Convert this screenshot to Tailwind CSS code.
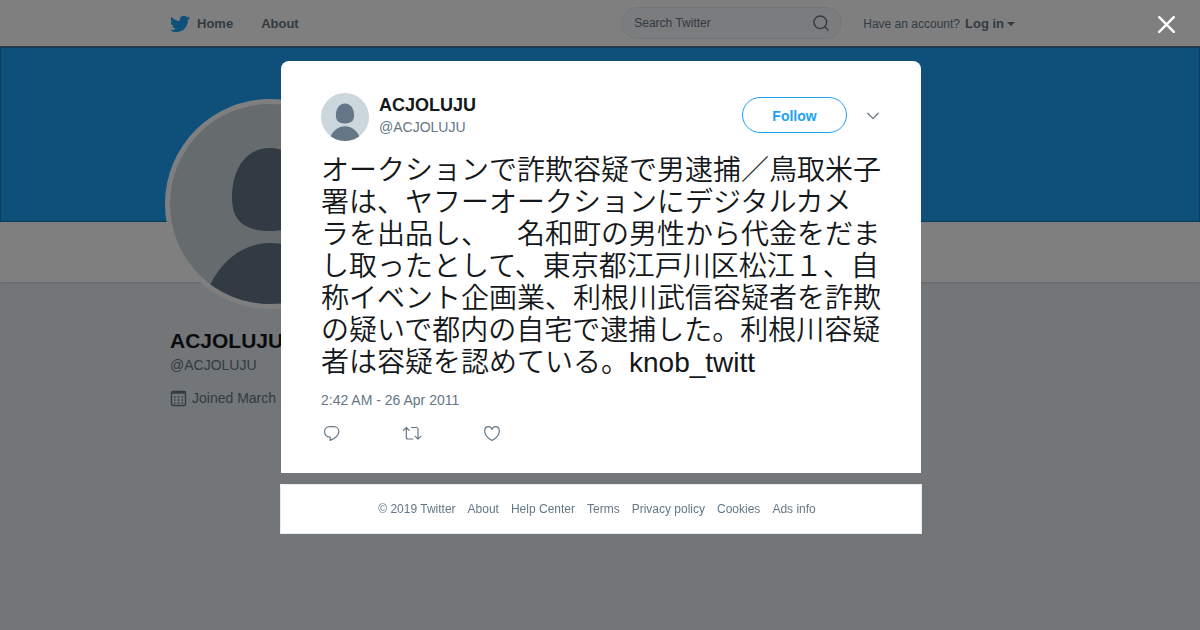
<!DOCTYPE html>
<html lang="ja">
<head>
  <meta charset="UTF-8">
  <meta name="viewport" content="width=device-width, initial-scale=1">
  <title>ACJOLUJU on Twitter</title>
  <script src="https://cdn.jsdelivr.net/npm/@tailwindcss/browser@4"></script>
</head>
<body class="min-h-screen overflow-hidden bg-[#e6ecf0] font-['Liberation_Sans','Noto_Sans_CJK_JP',sans-serif] text-sm text-[#657786]">

  <!-- shared avatar drawing -->
  <svg class="absolute size-0" aria-hidden="true">
    <symbol id="avatar" viewBox="0 0 200 200">
      <path fill="#ccd6dd" d="M0 0h200v200H0z"/>
      <path fill="#657786" d="M100 44c-24 0-38 21-38 50 0 23 13 33 38 33s38-10 38-33c0-29-14-50-38-50zM40 181c13-26 34-42 60-42s47 16 60 42v19H40z"/>
    </symbol>
  </svg>

  <!-- top bar -->
  <header class="border-b border-[#697178] bg-white">
    <div class="mx-auto flex h-[46px] max-w-[860px] items-center">
      <nav class="flex items-center gap-7 pt-0.5 text-[13px] font-bold">
        <a href="#" class="flex items-center gap-[7px]">
          <svg class="size-5" viewBox="0 0 24 24" fill="#1da1f2"><path d="M23.953 4.57a10 10 0 01-2.825.775 4.958 4.958 0 002.163-2.723c-.951.555-2.005.959-3.127 1.184a4.92 4.92 0 00-8.384 4.482C7.69 8.095 4.067 6.13 1.64 3.162a4.822 4.822 0 00-.666 2.475c0 1.71.87 3.213 2.188 4.096a4.904 4.904 0 01-2.228-.616v.06a4.923 4.923 0 003.946 4.827 4.996 4.996 0 01-2.212.085 4.936 4.936 0 004.604 3.417 9.867 9.867 0 01-6.102 2.105c-.39 0-.779-.023-1.17-.067a13.995 13.995 0 007.557 2.209c9.053 0 13.998-7.496 13.998-13.985 0-.21 0-.42-.015-.63A9.935 9.935 0 0024 4.59z"/></svg>
          Home
        </a>
        <a href="#">About</a>
      </nav>
      <form class="ml-auto flex h-8 w-[221px] items-center rounded-full border border-[#e6ecf0] bg-[#f5f8fa] px-3">
        <input type="text" aria-label="Search Twitter" placeholder="Search Twitter" class="min-w-0 flex-1 text-xs outline-none placeholder:text-[#657786]">
        <button type="button" aria-label="Search">
          <svg class="size-4" viewBox="0 0 16 16" fill="none" stroke="#657786" stroke-width="1.4" stroke-linecap="round"><circle cx="7.3" cy="7.3" r="6.3"/><path d="M12 12l3 3"/></svg>
        </button>
      </form>
      <button type="button" class="mr-[15px] ml-[21px] flex items-center gap-[5px] pt-0.5 text-xs">
        Have an account? <span class="text-[13px] font-bold">Log in</span>
        <span class="-ml-0.5 border-x-4 border-t-4 border-x-transparent border-t-[#657786]"></span>
      </button>
    </div>
  </header>

  <!-- profile -->
  <div class="h-[175px] border border-[#1878b5] bg-[#1da1f2]"></div>
  <div class="h-[60px] bg-white shadow-sm">
    <div class="mx-auto max-w-[870px]">
      <div class="relative -top-[123px] size-[210px] rounded-full bg-white p-[5px]">
        <svg class="size-full rounded-full"><use href="#avatar"/></svg>
      </div>
    </div>
  </div>
  <aside class="mx-auto max-w-[860px] pt-[46px]">
    <h1 class="text-[21px] leading-[26px] font-bold text-[#14171a]">ACJOLUJU</h1>
    <a href="#" class="block leading-[22px]">@ACJOLUJU</a>
    <p class="mt-3 flex items-center gap-[5px] leading-5">
      <svg class="size-[17px]" viewBox="0 0 17 17" fill="none" stroke="#657786"><rect x="1.5" y="1.5" width="14" height="14" rx="1.5" stroke-width="1.4"/><path d="M1.5 2.500h14" stroke-width="2.4"/><path d="M4 7h9.500M4 10h9.500M4 13h9.500" stroke-width="1.5" stroke-dasharray="1.5 2.300"/></svg>
      Joined March 2011
    </p>
  </aside>

  <!-- overlay with the tweet -->
  <div class="fixed inset-0 overflow-hidden bg-black/50 pt-[61px] pl-0.5">
    <button type="button" aria-label="Close" class="absolute top-4 right-[25px]">
      <svg class="size-[17px]" viewBox="0 0 17 17" fill="none" stroke="#fff" stroke-width="2.4" stroke-linecap="round"><path d="M1.2 1.2l14.6 14.6M15.8 1.2L1.2 15.8"/></svg>
    </button>

    <article class="mx-auto max-w-[640px] rounded-t-lg bg-white px-10 pt-8 pb-[31px]">
      <div class="flex items-center">
        <svg class="size-12 rounded-full"><use href="#avatar"/></svg>
        <div class="ml-2.5 pb-0.5 leading-[22px]">
          <div class="text-lg leading-[22px] font-bold text-[#14171a]">ACJOLUJU</div>
          <a href="#">@ACJOLUJU</a>
        </div>
        <button type="button" class="-mt-1 ml-auto h-9 w-[105px] rounded-full border border-[#1da1f2] pt-0.5 font-bold text-[#1da1f2]">Follow</button>
        <button type="button" aria-label="More" class="mr-0.5 ml-5 pb-0.5">
          <svg class="h-2 w-3" viewBox="0 0 12 8" fill="none" stroke="#657786" stroke-width="1.3" stroke-linecap="round" stroke-linejoin="round"><path d="M.8 1.2L6 6.6l5.2-5.4"/></svg>
        </button>
      </div>
      <p class="mt-3.5 text-[28px] leading-8 font-[350] whitespace-nowrap text-[#14171a]">オークションで詐欺容疑で男逮捕／鳥取米子<br>署は、ヤフーオークションにデジタルカメ<br>ラを出品し、<span class="inline-block w-7">&#x3000;</span>名和町の男性から代金をだま<br>し取ったとして、東京都江戸川区松江１、自<br>称イベント企画業、利根川武信容疑者を詐欺<br>の疑いで都内の自宅で逮捕した。利根川容疑<br>者は容疑を認めている。knob_twitt</p>
      <div class="mt-[9px] leading-6">2:42 AM - 26 Apr 2011</div>
      <div class="mt-[13px] ml-0.5 flex gap-[61px]">
        <button type="button" aria-label="Reply" class="w-[18px]">
          <svg class="h-[17px] w-[18px]" viewBox="0 0 18 17" fill="none" stroke="#657786" stroke-width="1.2" stroke-linejoin="round"><path d="M6.5 1.7h4.3c3 0 5.1 2.2 5.1 5 0 3.6-4.2 6.7-8.7 8.7v-3.3C3.6 12.2 1.600 9.700 1.600 6.800c0-2.900 2-5.100 4.900-5.100z"/></svg>
        </button>
        <button type="button" aria-label="Retweet" class="w-5">
          <svg class="h-[17px] w-5" viewBox="0 0 20 17" fill="none" stroke="#657786" stroke-width="1.2" stroke-linecap="round" stroke-linejoin="round"><path d="M1.500 5.300L4.300 2.500l2.800 2.800M4.300 2.500v9.500q0 2 2 2h4.500M9.500 2.500h4.500q2 0 2 2v9.500M13.200 11.400l2.800 2.700 2.800-2.700"/></svg>
        </button>
        <button type="button" aria-label="Like" class="w-[18px]">
          <svg class="h-[17px] w-[18px]" viewBox="0 0 18 17" fill="none" stroke="#657786" stroke-width="1.2" stroke-linejoin="round"><path d="M9 15.500C5.600 13.600 1.700 9.700 1.700 5.900c0-2.500 1.500-4.200 3.600-4.200C7 1.700 8.300 2.700 9 4.300c.7-1.600 2-2.600 3.700-2.600 2.100 0 3.600 1.700 3.600 4.200 0 3.800-3.900 7.700-7.300 9.600z"/></svg>
        </button>
      </div>
    </article>

    <footer class="mx-auto mt-[11px] flex h-[50px] max-w-[642px] items-center justify-center gap-3 border border-[#e6ecf0] bg-white pr-2 text-xs">
      <span>© 2019 Twitter</span>
      <a href="#">About</a>
      <a href="#">Help Center</a>
      <a href="#">Terms</a>
      <a href="#">Privacy policy</a>
      <a href="#">Cookies</a>
      <a href="#">Ads info</a>
    </footer>
  </div>
</body>
</html>
